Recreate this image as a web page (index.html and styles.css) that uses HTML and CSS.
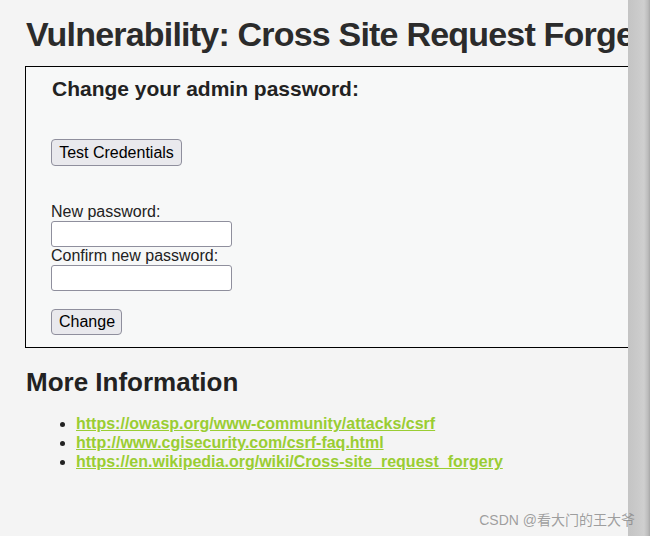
FILE: index.html
```html
<!DOCTYPE html>
<html>
<head>
<meta charset="utf-8">
<link rel="stylesheet" href="styles.css">
</head>
<body>
<div class="page">
  <h1 class="title">Vulnerability: Cross Site Request Forgery (CSRF)</h1>
  <div class="vulnerable-code">
    <h3 class="form-title">Change your admin password:</h3>
    <button class="btn btn-test">Test Credentials</button>
    <form class="pw-form">
      <label class="field-label">New password:</label>
      <input class="pw-input" type="password">
      <label class="field-label">Confirm new password:</label>
      <input class="pw-input" type="password">
      <button class="btn btn-change" type="button">Change</button>
    </form>
  </div>
  <h2 class="more-title">More Information</h2>
  <ul class="links">
    <li><a href="#">https://owasp.org/www-community/attacks/csrf</a></li>
    <li><a href="#">http://www.cgisecurity.com/csrf-faq.html</a></li>
    <li><a href="#">https://en.wikipedia.org/wiki/Cross-site_request_forgery</a></li>
  </ul>
</div>
<div class="scrollbar"></div>
<div class="watermark">CSDN @看大门的王大爷</div>
</body>
</html>
```
FILE: styles.css
```css
html, body {
  margin: 0;
  padding: 0;
  width: 650px;
  height: 536px;
  overflow: hidden;
  background: #f4f4f4;
}
body {
  position: relative;
  font-family: "Liberation Sans", Arial, sans-serif;
  color: #2a2a2a;
}
.page {
  width: 900px;
  padding: 15px 0 0 25px;
  display: flex;
  flex-direction: column;
  align-items: flex-start;
}
.title {
  margin: 0 0 0 1px;
  font-size: 34px;
  line-height: 38px;
  letter-spacing: -0.8px;
  font-weight: bold;
  white-space: nowrap;
  color: #2b2b2b;
}
.vulnerable-code {
  box-sizing: border-box;
  margin-top: 13px;
  width: 800px;
  height: 282px;
  border: 1px solid #000;
  background: #f7f8f8;
  padding: 9px 0 0 25px;
  display: flex;
  flex-direction: column;
  align-items: flex-start;
}
.form-title {
  margin: 0 0 0 1px;
  font-size: 21px;
  line-height: 25px;
  font-weight: bold;
  color: #222;
}
.btn {
  box-sizing: border-box;
  font-family: "Liberation Sans", Arial, sans-serif;
  font-size: 16px;
  color: #000;
  background: #e9e9ed;
  border: 1px solid #8f8f9d;
  border-radius: 4px;
  height: 27px;
  padding: 0 7px;
}
.btn-test {
  margin-top: 38px;
  width: 131px;
}
.pw-form {
  margin-top: 37px;
  display: flex;
  flex-direction: column;
  align-items: flex-start;
}
.field-label {
  font-size: 16px;
  line-height: 18px;
  color: #222;
}
.pw-input {
  box-sizing: border-box;
  width: 181px;
  height: 26px;
  margin: 0;
  border: 1px solid #8f8f9d;
  border-radius: 3px;
  background: #fff;
}
.btn-change {
  margin-top: 18px;
  width: 71px;
  height: 26px;
}
.more-title {
  margin: 20px 0 0 1px;
  font-size: 26px;
  line-height: 29px;
  font-weight: bold;
  color: #222;
}
.links {
  margin: 17px 0 0 0;
  padding-left: 51px;
  font-size: 16px;
  line-height: 19px;
}
.links li {
  color: #222;
}
.links a {
  color: #9acd32;
  font-weight: bold;
  text-decoration: underline;
}
.scrollbar {
  position: absolute;
  top: 0;
  right: 0;
  width: 22px;
  height: 536px;
  background: linear-gradient(to right, #c4c4c4 0px, #c9c9c9 8px, #cfcfcf 16px, #bcbcbc 20px, #a8a8a8 22px);
}
.watermark {
  position: absolute;
  right: 15px;
  bottom: 7px;
  font-family: "Liberation Sans", "Noto Sans CJK SC", sans-serif;
  font-size: 14px;
  color: rgba(130, 130, 130, 0.75);
  white-space: nowrap;
}
```
